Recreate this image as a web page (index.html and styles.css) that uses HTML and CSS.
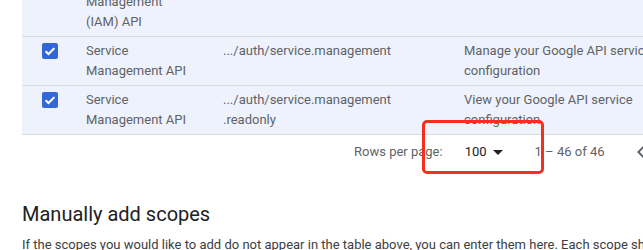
FILE: index.html
```html
<!DOCTYPE html>
<html>
<head>
<meta charset="utf-8">
<link rel="stylesheet" href="styles.css">
</head>
<body>
<div class="page">
  <div class="table">
    <div class="row">
      <div class="cell check-cell"></div>
      <div class="cell api">Identity and Access<br>Management<br>(IAM) API</div>
      <div class="cell scope"></div>
      <div class="cell desc"></div>
    </div>
    <div class="row">
      <div class="cell check-cell"><span class="checkbox"><svg viewBox="0 0 16 16" width="16" height="16"><path d="M3.6 8.2 6.5 11 12.4 5.1" fill="none" stroke="#fff" stroke-width="2"/></svg></span></div>
      <div class="cell api">Service<br>Management API</div>
      <div class="cell scope">.../auth/service.management</div>
      <div class="cell desc">Manage your Google API service configuration</div>
    </div>
    <div class="row">
      <div class="cell check-cell"><span class="checkbox"><svg viewBox="0 0 16 16" width="16" height="16"><path d="M3.6 8.2 6.5 11 12.4 5.1" fill="none" stroke="#fff" stroke-width="2"/></svg></span></div>
      <div class="cell api">Service<br>Management API</div>
      <div class="cell scope">.../auth/service.management<br>.readonly</div>
      <div class="cell desc">View your Google API service configuration</div>
    </div>
  </div>
  <div class="pager">
    <span class="pager-label">Rows per page:</span>
    <span class="pager-select">100 <svg class="caret" viewBox="0 0 10 5" width="10" height="5"><path d="M0 0h10L5 5z" fill="#202124"/></svg><span class="annot"></span></span>
    <span class="pager-range">1 – 46 of 46</span>
    <span class="pager-nav"><svg viewBox="0 0 24 24" width="24" height="24"><path d="M15.4 7.4 14 6l-6 6 6 6 1.4-1.4L10.8 12z" fill="#5f6368"/></svg></span>
  </div>
  <h2 class="heading">Manually add scopes</h2>
  <p class="intro">If the scopes you would like to add do not appear in the table above, you can enter them here. Each scope should be on a new line.</p>
</div>
</body>
</html>
```
FILE: styles.css
```css
html, body {
  margin: 0;
  padding: 0;
  background: #fff;
  overflow: hidden;
}
body {
  font-family: Roboto, "Liberation Sans", sans-serif;
  color: #5f6368;
}
.page {
  margin-top: -32px;
  padding-left: 22px;
  width: 760px;
}
.table {
  background: #eef2fc;
}
.row {
  display: grid;
  grid-template-columns: 64px 137px 241px 260px;
  border-bottom: 1px solid #dadce0;
}
.cell {
  font-size: 13px;
  line-height: 20px;
  padding: 4px 24px 4px 0;
}
.check-cell {
  padding: 6px 0 0 20px;
}
.checkbox {
  display: block;
  width: 16px;
  height: 16px;
  border-radius: 2px;
  background: #3367d6;
}
.checkbox svg {
  display: block;
}
.api {
  padding-right: 10px;
}
.pager {
  display: flex;
  align-items: center;
  height: 34px;
  padding-left: 332px;
  font-size: 13px;
  line-height: 20px;
  color: #5f6368;
}
.pager-label {
  margin-right: 22px;
}
.pager-select {
  position: relative;
  display: flex;
  align-items: center;
  gap: 6px;
  color: #202124;
  margin-right: 32px;
}
.caret {
  display: block;
}
.annot {
  position: absolute;
  box-sizing: border-box;
  left: -43px;
  top: -22px;
  width: 122px;
  height: 54px;
  border: 3px solid #f4301c;
  border-radius: 5px;
}
.pager-range {
  margin-right: 24px;
}
.pager-nav svg {
  display: block;
}
.heading {
  margin: 33px 0 0;
  font-size: 20px;
  font-weight: 400;
  line-height: 24px;
  color: #202124;
}
.intro {
  margin: 9px 0 0;
  font-size: 13px;
  line-height: 20px;
  color: #3c4043;
  white-space: nowrap;
}
```
